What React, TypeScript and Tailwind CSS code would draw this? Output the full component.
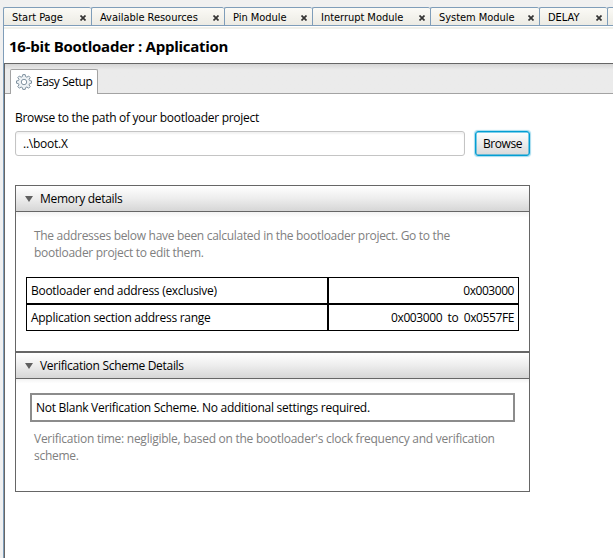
import type { ReactNode } from "react";

const tabs = [
  { label: "Start Page", box: "w-[88px]" },
  { label: "Available Resources", box: "w-[133px]" },
  { label: "Pin Module", box: "w-[88px]" },
  { label: "Interrupt Module", box: "w-[118px]" },
  { label: "System Module", box: "w-[109px]" },
  { label: "DELAY", box: "w-[68px]" },
  { label: "", box: "w-[20px]" },
];

function CloseIcon() {
  return (
    <svg width="6" height="6" viewBox="0 0 6 6" className="mt-[3px] shrink-0">
      <path d="M0.5 0.5L5.5 5.5M5.5 0.5L0.5 5.5" stroke="#333" strokeWidth="1.7" />
    </svg>
  );
}

function GearIcon() {
  return (
    <svg width="16" height="16" viewBox="0 0 16 16" className="shrink-0">
      <path
        d="M6.8 0.6h2.4l.4 2 1.3.6 1.7-1.2 1.6 1.6-1.2 1.7.6 1.3 1.9.3v2.3l-1.9.4-.6 1.3 1.2 1.7-1.6 1.6-1.7-1.2-1.3.6-.4 1.8H6.8l-.4-1.8-1.3-.6-1.7 1.2-1.6-1.6L3 10.9l-.6-1.3-1.9-.4V6.9l1.9-.3L3 5.3 1.8 3.6 3.4 2l1.7 1.2 1.3-.6z"
        fill="#eef2f5"
        stroke="#7e909e"
        strokeWidth="1"
      />
      <circle cx="8" cy="8" r="2.7" fill="#fff" stroke="#8496a4" />
    </svg>
  );
}

function SectionHeader({ children }: { children: ReactNode }) {
  return (
    <div className="flex h-[25px] shrink-0 items-center bg-linear-to-b from-white via-[#ededed] to-[#d6d6d6] pl-[9px]">
      <svg width="8" height="6" viewBox="0 0 8 6" className="mr-[7px]">
        <path d="M0 0H8L4 6Z" fill="#606060" />
      </svg>
      <span className="tracking-[-0.3px]">{children}</span>
    </div>
  );
}

export default function App() {
  return (
    <div className="h-[558px] w-[613px] overflow-hidden whitespace-nowrap bg-[#f0f0f0] pl-[3px] pt-[7px] font-['Open_Sans',sans-serif] text-[12px] leading-[17px] text-black">
      <div className="flex h-[19px] w-[640px] border-b border-[#7f9db9] font-['DejaVu_Sans_Condensed','DejaVu_Sans',sans-serif] text-[11px] [font-stretch:condensed]">
        {tabs.map((tab) => (
          <div
            key={tab.box + tab.label}
            className={`${tab.box} flex shrink-0 items-center justify-between rounded-t-[2px] border-l border-t border-[#7f9db9] bg-linear-to-b from-[#fbfaf6] to-[#ecebe4] pl-[8px] pr-[5px]`}
          >
            <span className="pt-px tracking-[-0.03px]">{tab.label}</span>
            {tab.label && <CloseIcon />}
          </div>
        ))}
      </div>
      <div className="flex h-[532px] flex-col border-l border-[#7f9db9] bg-white">
        <div className="mt-px h-[2px] shrink-0 bg-[#f0f0ea]" />
        <h1 className="h-[34px] shrink-0 pl-[5px] text-[15px] font-bold leading-[35px] tracking-[-0.26px]">
          16-bit Bootloader : Application
        </h1>
        <div className="flex grow flex-col border-l border-t border-[#666]">
          <div className="flex h-[30px] shrink-0 items-end border-b border-[#a3a3a3] bg-linear-to-b from-[#d6d6d6] via-[#ebebeb] via-20% to-[#ebebeb] pl-[5px]">
            <div className="-mb-px flex h-[25px] w-[88px] items-center rounded-t-[2px] border border-b-0 border-[#a3a3a3] bg-white pl-[5px]">
              <GearIcon />
              <span className="ml-[4px] pb-px tracking-[-0.4px]">Easy Setup</span>
            </div>
          </div>
          <div className="flex flex-col pl-[10px] pt-[15px]">
            <span className="tracking-[-0.29px]">Browse to the path of your bootloader project</span>
            <div className="mt-[5px] flex gap-[10px]">
              <div className="flex h-[25px] w-[450px] items-center rounded-[3px] border border-[#c4c4c4] bg-white pb-px pl-[7px] tracking-[-0.25px] shadow-[inset_0_2px_2px_#f2f2f2]">
                ..\boot.X
              </div>
              <button className="flex h-[25px] w-[55px] items-center justify-center rounded-[3px] border border-[#039ed3] bg-linear-to-b from-white to-[#d9d9d9] pb-px tracking-[-0.4px] shadow-[0_0_1px_1px_#a5dcef,inset_0_0_0_0.5px_#039ed3]">
                Browse
              </button>
            </div>
            <div className="mt-[29px] flex h-[307px] w-[515px] flex-col border border-[#666]">
              <SectionHeader>Memory details</SectionHeader>
              <div className="h-[142px] shrink-0 border-b-2 border-t border-[#666] bg-linear-to-b from-[#f3f3f3] via-white via-4% to-white pl-[10px] pt-[15px]">
                <p className="pl-[8px] tracking-[-0.3px] text-[#808080]">
                  The addresses below have been calculated in the bootloader project. Go to the
                  <br />
                  bootloader project to edit them.
                </p>
                <div className="mt-[16px] grid h-[54px] w-[493px] grid-cols-[302px_191px] grid-rows-2 leading-[25px] tracking-[-0.28px]">
                  <div className="border border-black pl-[4px]">Bootloader end address (exclusive)</div>
                  <div className="border border-black pr-[4px] text-right tracking-[-0.45px]">0x003000</div>
                  <div className="border border-black pl-[4px]">Application section address range</div>
                  <div className="whitespace-pre border border-black pr-[4px] text-right tracking-[-0.4px]">{"0x003000  to  0x0557FE"}</div>
                </div>
              </div>
              <SectionHeader>Verification Scheme Details</SectionHeader>
              <div className="grow border-t border-[#666] bg-linear-to-b from-[#f3f3f3] via-white via-4% to-white pl-[14px] pt-[14px]">
                <div className="flex h-[29px] w-[485px] items-center border-2 border-[#8c8c8c] pl-[4px] tracking-[-0.28px]">
                  Not Blank Verification Scheme. No additional settings required.
                </div>
                <p className="mt-[8px] pl-[4px] tracking-[-0.26px] text-[#808080]">
                  Verification time: negligible, based on the bootloader's clock frequency and verification
                  <br />
                  scheme.
                </p>
              </div>
            </div>
          </div>
        </div>
      </div>
    </div>
  );
}
